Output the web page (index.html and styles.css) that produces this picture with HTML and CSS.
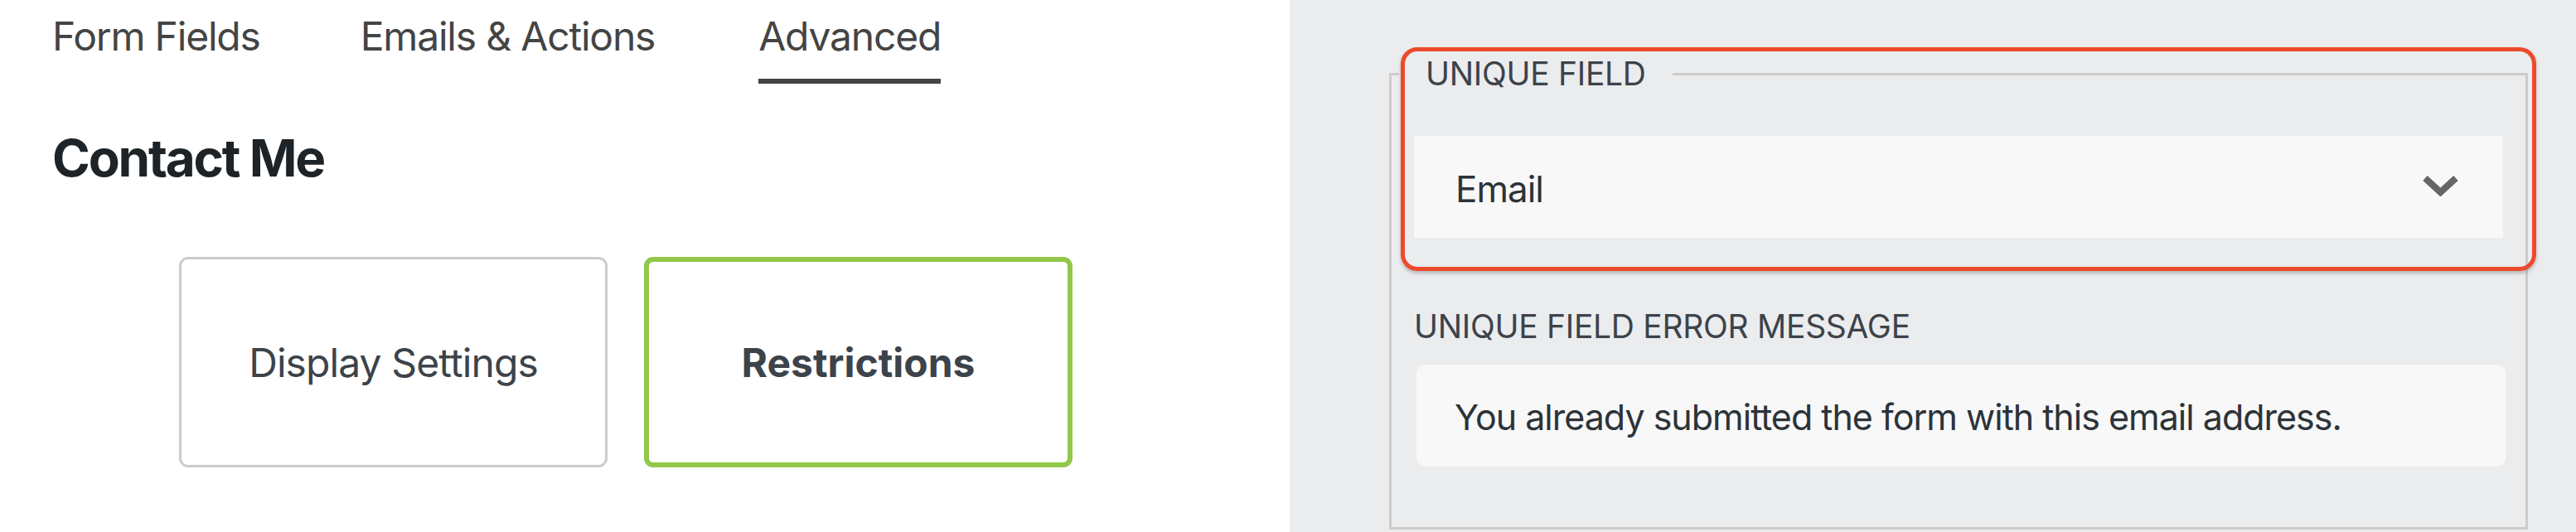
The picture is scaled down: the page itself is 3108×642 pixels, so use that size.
FILE: index.html
```html
<!DOCTYPE html>
<html lang="en">
<head>
<meta charset="utf-8">
<title>Form settings</title>
<link rel="stylesheet" href="styles.css">
</head>
<body>
<div class="page">
  <section class="left">
    <nav class="tabs">
      <span class="tab">Form Fields</span>
      <span class="tab">Emails &amp; Actions</span>
      <span class="tab active">Advanced</span>
    </nav>
    <h1 class="title">Contact Me</h1>
    <div class="cards">
      <div class="card">Display Settings</div>
      <div class="card selected">Restrictions</div>
    </div>
  </section>
  <section class="right">
    <fieldset class="group">
      <legend class="legend">UNIQUE FIELD</legend>
      <div class="select">
        <span class="select-value">Email</span>
        <svg class="chevron" width="43" height="26" viewBox="0 0 43 26" aria-hidden="true">
          <polyline points="3,4 21.5,21 40,4" fill="none" stroke="#666" stroke-width="8"/>
        </svg>
      </div>
      <div class="label">UNIQUE FIELD ERROR MESSAGE</div>
      <div class="textarea">You already submitted the form with this email address.</div>
    </fieldset>
    <div class="highlight"></div>
  </section>
</div>
</body>
</html>
```
FILE: styles.css
```css
* { box-sizing: border-box; }
html, body { margin: 0; padding: 0; }
body {
  font-family: Inter, "Noto Sans", "Liberation Sans", sans-serif;
  background: #ffffff;
}
.page {
  display: flex;
  width: 3108px;
  height: 642px;
  overflow: hidden;
}
.left {
  width: 1556px;
  flex: none;
  background: #ffffff;
  padding-left: 63px;
}
.tabs {
  display: flex;
  gap: 121px;
  padding-top: 20px;
}
.tab {
  font-size: 48px;
  line-height: 48px;
  letter-spacing: -1.2px;
  color: #444444;
  padding-bottom: 27px;
  border-bottom: 6px solid transparent;
}
.tab.active {
  margin-left: 4px;
  border-bottom-color: #444444;
}
.title {
  margin: 59px 0 0 0;
  font-size: 62px;
  line-height: 62px;
  font-weight: 700;
  letter-spacing: -2.2px;
  color: #1d2327;
}
.cards {
  display: flex;
  gap: 44px;
  margin: 88px 0 0 153px;
}
.card {
  width: 517px;
  height: 254px;
  border: 3px solid #cccccc;
  border-radius: 11px;
  display: flex;
  align-items: center;
  justify-content: center;
  font-size: 48px;
  letter-spacing: -0.9px;
  color: #3c434a;
  background: #ffffff;
}
.card.selected {
  border: 6px solid #92c84a;
  font-weight: 700;
  letter-spacing: 0;
}
.right {
  flex: 1;
  background: #ebecee;
  position: relative;
  padding-top: 69px;
}
.group {
  margin: 0 0 0 120px;
  width: 1374px;
  border: 3px solid #cccccc;
  padding: 0 27px 73px 27px;
  min-width: 0;
}
.legend {
  margin-left: -18px;
  padding: 0 32px;
  font-size: 39px;
  line-height: 40px;
  letter-spacing: -0.3px;
  color: #3c434a;
}
.select {
  margin-top: 55px;
  height: 123px;
  background: #f8f8f8;
  display: flex;
  align-items: center;
  justify-content: space-between;
  padding: 0 54px 0 50px;
}
.select-value {
  font-size: 44px;
  letter-spacing: -1px;
  color: #2c3338;
  padding-top: 5px;
}
.chevron {
  display: block;
  margin-top: -4px;
}
.label {
  margin-top: 87px;
  font-size: 39px;
  line-height: 40px;
  letter-spacing: -0.3px;
  color: #3c434a;
}
.textarea {
  margin: 26px -3px 0 3px;
  height: 123px;
  border-radius: 10px;
  background: #f8f8f8;
  display: flex;
  align-items: center;
  padding: 2px 46px 0 46px;
  font-size: 43px;
  letter-spacing: -1px;
  color: #2c3338;
}
.highlight {
  position: absolute;
  left: 134px;
  top: 57px;
  width: 1370px;
  height: 270px;
  border: 5px solid #ec4a2c;
  border-radius: 20px;
  box-shadow: 0 3px 4px rgba(0, 0, 0, 0.22);
  pointer-events: none;
}
```
